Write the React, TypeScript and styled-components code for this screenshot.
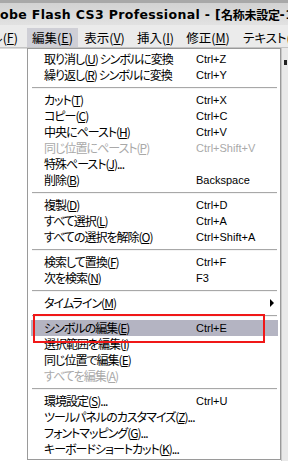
import styled, { createGlobalStyle } from "styled-components";

const GlobalStyle = createGlobalStyle`
  html, body {
    margin: 0;
    padding: 0;
    background: #ffffff;
  }
  body {
    font-family: "Noto Sans CJK JP", "Liberation Sans", sans-serif;
  }
`;

const Screen = styled.div`
  position: relative;
  width: 288px;
  height: 461px;
  overflow: hidden;
  display: flex;
  flex-direction: column;
  background: #ffffff;
`;

const TitleBar = styled.div`
  height: 25px;
  flex: none;
  display: flex;
  align-items: center;
  box-sizing: border-box;
  border-top: 3px solid #a8a8a8;
  background: linear-gradient(#d2d2d2, #e2e2e2);
  white-space: nowrap;
  overflow: hidden;
  font-family: "DejaVu Sans", "Noto Sans CJK JP", sans-serif;
  font-weight: 700;
  font-size: 12.5px;
  letter-spacing: 0.35px;
  color: #000;
`;

const TitleCjk = styled.span`
  font-family: "Noto Sans CJK JP", sans-serif;
  font-size: 12px;
  letter-spacing: -0.3px;
`;

const MenuBar = styled.div`
  height: 22px;
  flex: none;
  display: flex;
  align-items: stretch;
  background: #ebebeb;
  border-bottom: 1px solid #c4c4c4;
  white-space: nowrap;
  overflow: hidden;
  font-size: 12.5px;
  font-feature-settings: "palt" 1;
`;

const MenuTitle = styled.div<{ $open?: boolean; $w: number }>`
  flex: none;
  width: ${(p) => p.$w}px;
  display: flex;
  align-items: center;
  justify-content: center;
  margin-top: 3px;
  background: ${(p) => (p.$open ? "#cfcfd6" : "transparent")};
  color: #000;
  &:first-child {
    justify-content: flex-end;
    padding-right: 9px;
    box-sizing: border-box;
  }
  &:last-child {
    justify-content: flex-start;
    padding-left: 7px;
  }
`;

const Body = styled.div`
  flex: 1;
  display: flex;
  min-height: 0;
`;

const LeftPane = styled.div`
  width: 27px;
  flex: none;
  background: #ffffff;
  border-top: 1px solid #dadada;
`;

const Menu = styled.div`
  width: 254px;
  flex: none;
  align-self: flex-start;
  box-sizing: border-box;
  padding: 2px 2px 2px 3px;
  background: #ffffff;
  border: 1px solid #9a9a9a;
  font-size: 12px;
  font-feature-settings: "palt" 1;
  color: #000;
`;

const Item = styled.div<{ $disabled?: boolean; $active?: boolean }>`
  position: relative;
  height: 16px;
  display: grid;
  grid-template-columns: 152px 1fr;
  align-items: center;
  padding-left: 13px;
  white-space: nowrap;
  line-height: 16px;
  color: ${(p) => (p.$disabled ? "#a9a9a9" : "#000")};
  background: ${(p) => (p.$active ? "#b4b4c2" : "transparent")};
  u {
    text-decoration-thickness: 1px;
    text-underline-offset: 1px;
  }
`;

const Label = styled.span`
  letter-spacing: -1px;
`;

const Shortcut = styled.span`
  font-family: "Liberation Sans", sans-serif;
  font-size: 11px;
`;

const SubArrow = styled.span`
  position: absolute;
  right: 4px;
  top: 4px;
  width: 0;
  height: 0;
  border-top: 4px solid transparent;
  border-bottom: 4px solid transparent;
  border-left: 4px solid #000;
`;

const Separator = styled.div`
  height: 9px;
  display: flex;
  align-items: center;
  padding: 0 1px;
  &::after {
    content: "";
    flex: 1;
    height: 0;
    border-top: 1px solid #a8a8a8;
    border-bottom: 1px solid #f4f4f4;
  }
`;

const RightPane = styled.div`
  flex: 1;
  background: #e9e9e9;
  border-left: 1px solid #c8c8c8;
  display: flex;
  flex-direction: column;
  align-items: flex-end;
  padding-top: 12px;
`;

const Mark = styled.span`
  width: 3px;
  height: 5px;
  background: #222;
  margin-right: 1px;
`;

const Callout = styled.div`
  position: absolute;
  left: 33px;
  top: 314px;
  width: 232px;
  height: 29px;
  box-sizing: border-box;
  border: 2px solid #f01818;
  pointer-events: none;
`;

type Entry =
  | { sep: true }
  | {
      sep?: false;
      label: React.ReactNode;
      key?: string;
      disabled?: boolean;
      active?: boolean;
      sub?: boolean;
    };

const m = (pre: string, k: string, post = "") => (
  <>
    {pre}(<u>{k}</u>){post}
  </>
);

const entries: Entry[] = [
  { label: m("取り消し", "U", " シンボルに変換"), key: "Ctrl+Z" },
  { label: m("繰り返し", "R", " シンボルに変換"), key: "Ctrl+Y" },
  { sep: true },
  { label: m("カット", "T"), key: "Ctrl+X" },
  { label: m("コピー", "C"), key: "Ctrl+C" },
  { label: m("中央にペースト", "H"), key: "Ctrl+V" },
  { label: m("同じ位置にペースト", "P"), key: "Ctrl+Shift+V", disabled: true },
  { label: m("特殊ペースト", "J", "...") },
  { label: m("削除", "B"), key: "Backspace" },
  { sep: true },
  { label: m("複製", "D"), key: "Ctrl+D" },
  { label: m("すべて選択", "L"), key: "Ctrl+A" },
  { label: m("すべての選択を解除", "O"), key: "Ctrl+Shift+A" },
  { sep: true },
  { label: m("検索して置換", "F"), key: "Ctrl+F" },
  { label: m("次を検索", "N"), key: "F3" },
  { sep: true },
  { label: m("タイムライン", "M"), sub: true },
  { sep: true },
  { label: m("シンボルの編集", "E"), key: "Ctrl+E", active: true },
  { label: m("選択範囲を編集", "I") },
  { label: m("同じ位置で編集", "E") },
  { label: m("すべてを編集", "A"), disabled: true },
  { sep: true },
  { label: m("環境設定", "S", "..."), key: "Ctrl+U" },
  { label: m("ツールパネルのカスタマイズ", "Z", "...") },
  { label: m("フォントマッピング", "G", "...") },
  { label: m("キーボードショートカット", "K", "...") },
];

const menus = [
  { label: m("ル", "F"), w: 27 },
  { label: m("編集", "E"), w: 51, open: true },
  { label: m("表示", "V"), w: 53 },
  { label: m("挿入", "I"), w: 49 },
  { label: m("修正", "M"), w: 56 },
  { label: m("テキスト", "T"), w: 60 },
];

export default function App() {
  return (
    <>
      <GlobalStyle />
      <Screen>
        <TitleBar>
          obe Flash CS3 Professional - [<TitleCjk>名称未設定</TitleCjk>-1
        </TitleBar>
        <MenuBar>
          {menus.map((x, i) => (
            <MenuTitle key={i} $w={x.w} $open={x.open}>
              {x.label}
            </MenuTitle>
          ))}
        </MenuBar>
        <Body>
          <LeftPane />
          <Menu>
            {entries.map((e, i) =>
              e.sep ? (
                <Separator key={i} />
              ) : (
                <Item key={i} $disabled={e.disabled} $active={e.active}>
                  <Label>{e.label}</Label>
                  <Shortcut>{e.key ?? ""}</Shortcut>
                  {e.sub && <SubArrow />}
                </Item>
              )
            )}
          </Menu>
          <RightPane>
            <Mark />
          </RightPane>
        </Body>
        <Callout />
      </Screen>
    </>
  );
}
